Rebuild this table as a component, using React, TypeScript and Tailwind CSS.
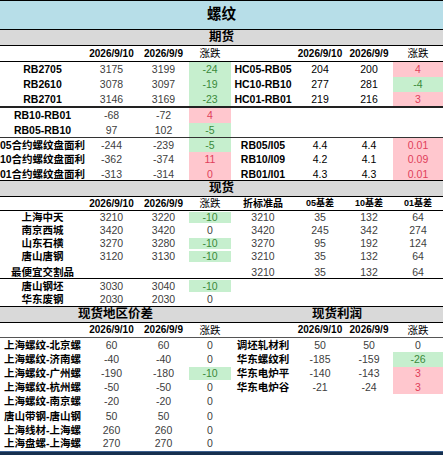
import React from 'react'

type Tone = 'up' | 'down' | 'flat'

const GRID = 'grid grid-cols-[85px_53px_51px_42px_64px_50px_48px_50px]'

const toneClass: Record<Tone, string> = {
  up: 'bg-[#ffc7ce] text-[#e0405a]',
  down: 'bg-[#c6efce] text-[#3a8a3a]',
  flat: 'text-[#404040]',
}

// cell helpers
const E = () => <div />
const L = (t: string) => <div className="flex items-center justify-center whitespace-nowrap font-bold text-black">{t}</div>
const V = (t: string) => <div className="flex items-center justify-center text-[#404040]">{t}</div>
const K = (t: string) => <div className="flex items-center justify-center text-black">{t}</div>
const D = (t: string) => <div className="flex items-center justify-center whitespace-nowrap text-[10px] font-bold text-black">{t}</div>
const S = (t: string) => <div className="flex items-center justify-center whitespace-nowrap text-[9px] font-bold text-black">{t}</div>
const H = (t: string) => <div className="flex items-center justify-center text-black">{t}</div>
const C = (t: string, tone: Tone, inset = false) => (
  <div className={`flex items-center justify-center ${toneClass[tone]} ${inset ? 'my-px' : ''}`}>{t}</div>
)

function Row({ h, cells, line, bottom }: { h: string; cells: React.ReactNode[]; line?: string; bottom?: boolean }) {
  return (
    <div className={`${GRID} ${h} ${line ?? ''} ${bottom ? '[&>div]:items-end [&>div]:pb-[1px]' : ''} text-[10.5px] leading-none`}>
      {cells.map((c, i) => (
        <React.Fragment key={i}>{c}</React.Fragment>
      ))}
    </div>
  )
}

function SectionBar({ children }: { children: React.ReactNode }) {
  return (
    <div className="flex h-[17px] items-center justify-center border-y border-black bg-[#d9d9d9] text-[12.5px] font-bold leading-none text-black">
      {children}
    </div>
  )
}

export default function App() {
  return (
    <div className="h-[455px] w-[443px] overflow-hidden bg-white font-['Liberation_Sans','Noto_Sans_CJK_SC',sans-serif]">
      {/* title */}
      <div className="flex h-[30px] items-center justify-center border-y border-black bg-[#b7dee8] text-[14.5px] font-bold text-black">
        螺纹
      </div>
      <div className="flex h-[16px] items-center justify-center border-b border-black bg-[#d9d9d9] text-[12.5px] font-bold leading-none text-black">
        期货
      </div>

      {/* 期货 */}
      <Row h="h-[16px]" line="border-b border-black" cells={[E(), D('2026/9/10'), D('2026/9/9'), H('涨跌'), E(), D('2026/9/10'), D('2026/9/9'), H('涨跌')]} />
      <Row h="h-[15px]" cells={[L('RB2705'), V('3175'), V('3199'), C('-24', 'down'), L('HC05-RB05'), K('204'), K('200'), C('4', 'up')]} />
      <Row h="h-[15px]" cells={[L('RB2610'), V('3078'), V('3097'), C('-19', 'down'), L('HC10-RB10'), K('277'), K('281'), C('-4', 'down')]} />
      <Row h="h-[16px]" line="border-b-2 border-[#222]" cells={[L('RB2701'), V('3146'), V('3169'), C('-23', 'down'), L('HC01-RB01'), K('219'), K('216'), C('3', 'up')]} />
      <Row h="h-[15px]" cells={[L('RB10-RB01'), V('-68'), V('-72'), C('4', 'up'), E(), E(), E(), E()]} />
      <Row h="h-[15px]" line="border-b border-[#333]" cells={[L('RB05-RB10'), V('97'), V('102'), C('-5', 'down'), E(), E(), E(), E()]} />
      <Row h="h-[14px]" cells={[L('05合约螺纹盘面利'), V('-244'), V('-239'), C('-5', 'down'), L('RB05/I05'), K('4.4'), K('4.4'), C('0.01', 'up')]} />
      <Row h="h-[14px]" cells={[L('10合约螺纹盘面利'), V('-362'), V('-374'), C('11', 'up'), L('RB10/I09'), K('4.2'), K('4.1'), C('0.09', 'up')]} />
      <Row h="h-[14px]" bottom cells={[L('01合约螺纹盘面利'), V('-313'), V('-314'), C('0', 'up'), L('RB01/I01'), K('4.3'), K('4.3'), C('0.01', 'up')]} />

      {/* 现货 */}
      <SectionBar>现货</SectionBar>
      <Row h="h-[14px]" line="border-b border-black" cells={[E(), D('2026/9/10'), D('2026/9/9'), H('涨跌'), D('折标准品'), S('05基差'), S('10基差'), S('01基差')]} />
      <Row h="h-[13px]" cells={[L('上海中天'), V('3210'), V('3220'), C('-10', 'down', true), V('3210'), V('35'), V('132'), V('64')]} />
      <Row h="h-[13px]" cells={[L('南京西城'), V('3420'), V('3420'), C('0', 'flat'), V('3420'), V('245'), V('342'), V('274')]} />
      <Row h="h-[13px]" cells={[L('山东石横'), V('3270'), V('3280'), C('-10', 'down', true), V('3270'), V('95'), V('192'), V('124')]} />
      <Row h="h-[13px]" cells={[L('唐山唐钢'), V('3120'), V('3130'), C('-10', 'down', true), V('3210'), V('35'), V('132'), V('64')]} />
      <Row h="h-[16px]" bottom line="border-b border-black" cells={[L('最便宜交割品'), E(), E(), E(), V('3210'), V('35'), V('132'), V('64')]} />
      <Row h="h-[14px]" cells={[L('唐山钢坯'), V('3030'), V('3040'), C('-10', 'down', true), E(), E(), E(), E()]} />
      <Row h="h-[13px]" cells={[L('华东废钢'), V('2030'), V('2030'), C('0', 'flat'), E(), E(), E(), E()]} />

      {/* 现货地区价差 / 现货利润 */}
      <div className="grid h-[17px] grid-cols-[231px_212px] border-y border-black bg-[#d9d9d9] text-[12.5px] font-bold leading-none text-black">
        <div className="flex items-center justify-center">现货地区价差</div>
        <div className="flex items-center justify-center">现货利润</div>
      </div>
      <Row h="h-[15px]" line="border-b border-[#555]" cells={[E(), D('2026/9/10'), D('2026/9/9'), H('涨跌'), E(), D('2026/9/10'), D('2026/9/9'), H('涨跌')]} />
      <Row h="h-[14px]" cells={[L('上海螺纹-北京螺'), V('60'), V('60'), C('0', 'flat'), L('调坯轧材利'), V('50'), V('50'), C('0', 'flat')]} />
      <Row h="h-[15px]" cells={[L('上海螺纹-济南螺'), V('-40'), V('-40'), C('0', 'flat'), L('华东螺纹利'), V('-185'), V('-159'), C('-26', 'down')]} />
      <Row h="h-[13px]" cells={[L('上海螺纹-广州螺'), V('-190'), V('-180'), C('-10', 'down'), L('华东电炉平'), V('-140'), V('-143'), C('3', 'up')]} />
      <Row h="h-[14px]" cells={[L('上海螺纹-杭州螺'), V('-50'), V('-50'), C('0', 'flat'), L('华东电炉谷'), V('-21'), V('-24'), C('3', 'up')]} />
      <Row h="h-[15px]" cells={[L('上海螺纹-南京螺'), V('-20'), V('-20'), C('0', 'flat'), E(), E(), E(), E()]} />
      <Row h="h-[15px]" cells={[L('唐山带钢-唐山钢'), V('50'), V('50'), C('0', 'flat'), E(), E(), E(), E()]} />
      <Row h="h-[12px]" cells={[L('上海线材-上海螺'), V('260'), V('260'), C('0', 'flat'), E(), E(), E(), E()]} />
      <Row h="h-[15px]" cells={[L('上海盘螺-上海螺'), V('270'), V('270'), C('0', 'flat'), E(), E(), E(), E()]} />

      <div className="h-[4px] border-t border-[#3b5f8f] bg-[#16304f]" />
    </div>
  )
}
